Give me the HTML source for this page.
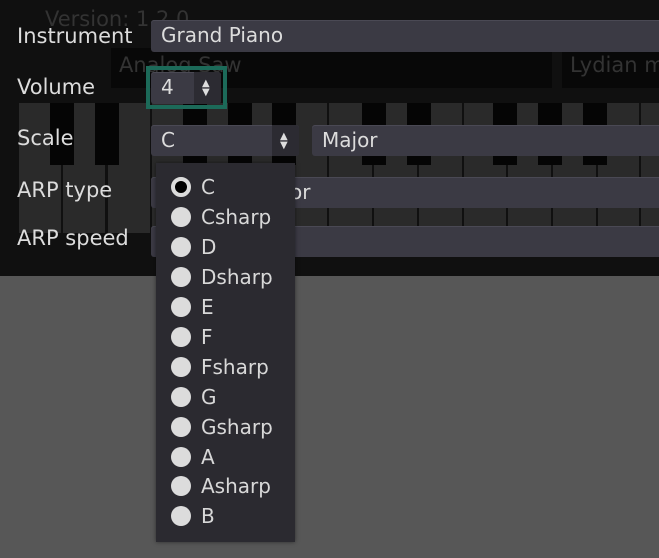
<!DOCTYPE html>
<html><head><style>
*{margin:0;padding:0;box-sizing:border-box}
body{width:659px;height:558px;overflow:hidden;background:#575757;font-family:"DejaVu Sans","Liberation Sans",sans-serif;position:relative}
.a{position:absolute}
#top{left:0;top:0;width:659px;height:276px;background:#101010}
.lbl{position:absolute;left:17px;color:#dcdcdc;font-size:21px}
.f{position:absolute;background:#3b3a44;border-radius:3px;color:#dcdcdc;font-size:20px;padding-left:10px;line-height:31px;box-shadow:inset 0 1px 0 #4a4954}
.arr{position:absolute;background:#2c2b32;border-radius:0 3px 3px 0}
.wk{position:absolute;top:103px;height:130px;background:#2a2a2a}
.bk{position:absolute;top:103px;height:62px;width:24px;background:#050505}
.it{position:absolute;left:171px;color:#d8d8d8;font-size:20px;height:30px;line-height:30px}
.it i{display:inline-block;width:20px;height:20px;border-radius:50%;background:#dcdcdc;vertical-align:middle;margin-right:10px;margin-top:-3px}
</style></head><body>
<div id="top" class="a"></div>
<div class="a" style="left:45px;top:7px;color:#333;font-size:21px">Version: 1.2.0</div>
<div class="a" style="left:111px;top:48px;width:441px;height:40px;background:#080808;color:#333;font-size:21px;padding:5px 8px">Analog Saw</div>
<div class="a" style="left:562px;top:48px;width:97px;height:40px;background:#080808;color:#333;font-size:21px;padding:5px 8px;white-space:nowrap;overflow:hidden">Lydian mode</div>
<!-- piano -->
<div class="wk" style="left:19px;width:42px"></div><div class="wk" style="left:63px;width:42px"></div><div class="wk" style="left:108px;width:42px"></div>
<div class="wk" style="left:152px;width:42px"></div><div class="wk" style="left:197px;width:42px"></div><div class="wk" style="left:241px;width:42px"></div><div class="wk" style="left:285px;width:42px"></div>
<div class="wk" style="left:329px;width:43px"></div><div class="wk" style="left:374px;width:43px"></div><div class="wk" style="left:419px;width:43px"></div>
<div class="wk" style="left:464px;width:42px"></div><div class="wk" style="left:508px;width:43px"></div><div class="wk" style="left:553px;width:43px"></div><div class="wk" style="left:598px;width:41px"></div><div class="wk" style="left:641px;width:20px"></div>
<div class="bk" style="left:50px"></div><div class="bk" style="left:95px"></div>
<div class="bk" style="left:183px"></div><div class="bk" style="left:228px"></div><div class="bk" style="left:272px"></div>
<div class="bk" style="left:362px"></div><div class="bk" style="left:407px"></div>
<div class="bk" style="left:493px"></div><div class="bk" style="left:538px"></div><div class="bk" style="left:583px"></div>
<!-- labels -->
<div class="lbl" style="top:24px">Instrument</div>
<div class="lbl" style="top:75px">Volume</div>
<div class="lbl" style="top:126px">Scale</div>
<div class="lbl" style="top:178px">ARP type</div>
<div class="lbl" style="top:226px">ARP speed</div>
<div class="f" style="left:151px;top:20px;width:520px;height:32px">Grand Piano</div>
<div class="a" style="left:146px;top:66px;width:81px;height:43px;border:4px solid #1c6a59"></div>
<div class="f" style="left:151px;top:72px;width:70px;height:32px">4</div>
<div class="arr" style="left:194px;top:72px;width:27px;height:32px"></div>
<div class="a" style="left:202px;top:79px;color:#ddd;font-size:10px;line-height:9px">▲<br>▼</div>
<div class="f" style="left:151px;top:125px;width:148px;height:31px;line-height:30px">C</div>
<div class="arr" style="left:272px;top:125px;width:27px;height:31px"></div>
<div class="a" style="left:280px;top:132px;color:#ddd;font-size:10px;line-height:9px">▲<br>▼</div>
<div class="f" style="left:312px;top:125px;width:360px;height:31px;line-height:30px">Major</div>
<div class="f" style="left:151px;top:177px;width:520px;height:31px;line-height:30px"><span style="position:absolute;left:139px">or</span></div>
<div class="f" style="left:151px;top:226px;width:520px;height:31px"></div>
<!-- popup -->
<div class="a" style="left:156px;top:163px;width:139px;height:379px;background:#2b2a30;box-shadow:0 0 4px rgba(0,0,0,.5)"></div>
<div class="it" style="top:172px"><i style="background:#000;border:4px solid #dcdcdc"></i>C</div>
<div class="it" style="top:202px"><i></i>Csharp</div>
<div class="it" style="top:232px"><i></i>D</div>
<div class="it" style="top:262px"><i></i>Dsharp</div>
<div class="it" style="top:292px"><i></i>E</div>
<div class="it" style="top:322px"><i></i>F</div>
<div class="it" style="top:352px"><i></i>Fsharp</div>
<div class="it" style="top:382px"><i></i>G</div>
<div class="it" style="top:412px"><i></i>Gsharp</div>
<div class="it" style="top:442px"><i></i>A</div>
<div class="it" style="top:471px"><i></i>Asharp</div>
<div class="it" style="top:501px"><i></i>B</div>
</body></html>
